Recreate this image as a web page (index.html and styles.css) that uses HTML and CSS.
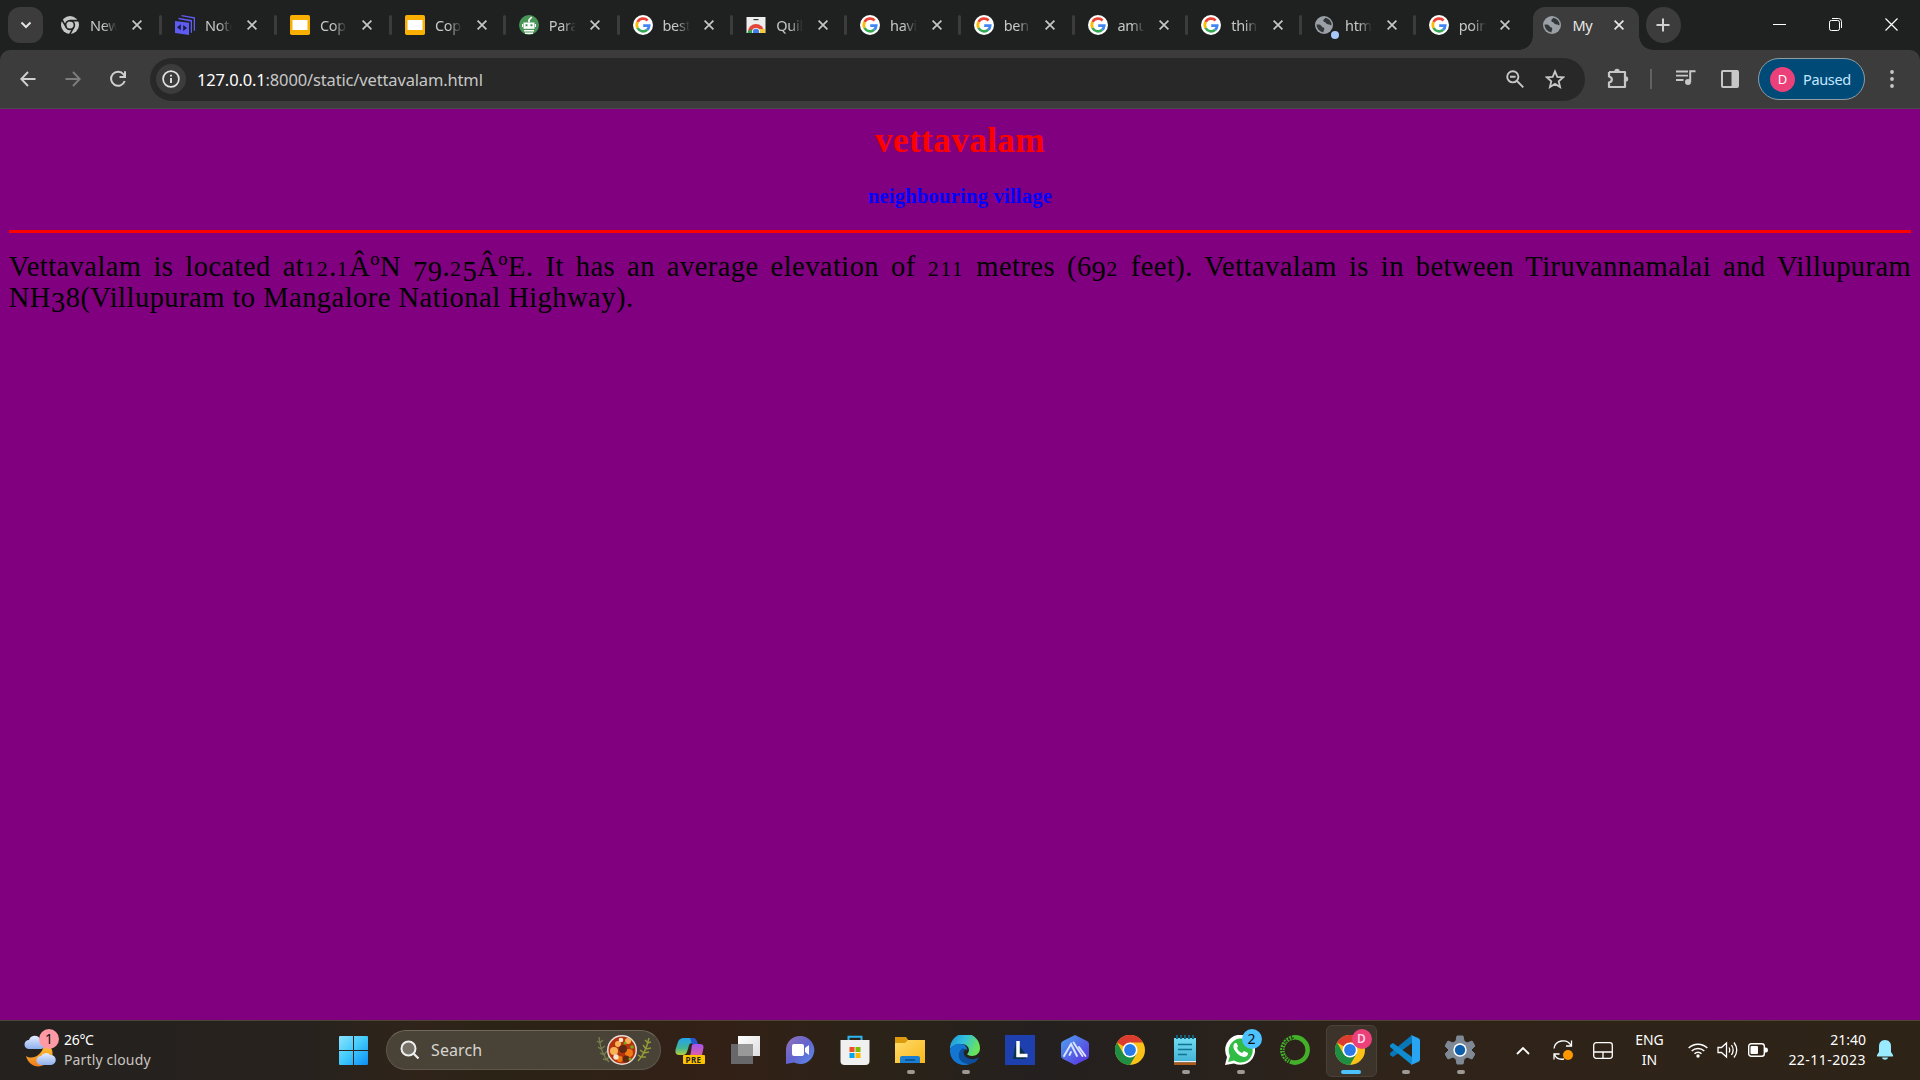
FILE: index.html
```html
<!DOCTYPE html>
<html lang="en">
<head>
<meta charset="utf-8">
<title>My page</title>
<link rel="stylesheet" href="styles.css">
</head>
<body>
<svg class="defs" width="0" height="0" aria-hidden="true">
  <defs>
    <linearGradient id="gWin" x1="0" y1="0" x2="1" y2="1"><stop offset="0" stop-color="#8ae4ff"/><stop offset=".5" stop-color="#40c8fb"/><stop offset="1" stop-color="#0a8df5"/></linearGradient>
    <linearGradient id="gCopA" x1="0" y1="0" x2="0" y2="1"><stop offset="0" stop-color="#22a5ee"/><stop offset=".6" stop-color="#42b596"/><stop offset="1" stop-color="#b6cf3a"/></linearGradient>
    <linearGradient id="gCopB" x1="0" y1="0" x2="0" y2="1"><stop offset="0" stop-color="#a455ee"/><stop offset="1" stop-color="#ee6090"/></linearGradient>
    <linearGradient id="gChat" x1="0" y1="0" x2="1" y2="1"><stop offset="0" stop-color="#9673b9"/><stop offset=".5" stop-color="#6264ce"/><stop offset="1" stop-color="#5b8dec"/></linearGradient>
    <linearGradient id="gFold" x1="0" y1="0" x2="1" y2="1"><stop offset="0" stop-color="#ffdb6b"/><stop offset="1" stop-color="#f9b71a"/></linearGradient>
    <linearGradient id="gEdge" x1="0" y1="0" x2="1" y2=".4"><stop offset="0" stop-color="#1c8ed8"/><stop offset=".5" stop-color="#32bfdc"/><stop offset="1" stop-color="#69e45a"/></linearGradient>
    <linearGradient id="gHex" x1="0" y1="0" x2="1" y2="1"><stop offset="0" stop-color="#4fa3ee"/><stop offset="1" stop-color="#5a2be0"/></linearGradient>
    <linearGradient id="gNote" x1="0" y1="0" x2="0" y2="1"><stop offset="0" stop-color="#6fdcf2"/><stop offset="1" stop-color="#46b4d6"/></linearGradient>
    <linearGradient id="gMoon" x1="0" y1="0" x2="0" y2="1"><stop offset="0" stop-color="#ffc533"/><stop offset="1" stop-color="#ef7c1c"/></linearGradient>
    <linearGradient id="gCloud" x1="0" y1="0" x2="0" y2="1"><stop offset="0" stop-color="#e3edff"/><stop offset="1" stop-color="#8fb0ec"/></linearGradient>
    <linearGradient id="gSq" x1="0" y1="0" x2="1" y2="1"><stop offset="0" stop-color="#fff"/><stop offset="1" stop-color="#dcdcdc"/></linearGradient>
  </defs>
  <symbol id="x" viewBox="0 0 10 10"><path d="M.6.6l8.8 8.8M9.4.6L.6 9.4" stroke="currentColor" stroke-width="1.7" fill="none"/></symbol>
  <symbol id="google" viewBox="0 0 20 20"><circle cx="10" cy="10" r="10" fill="#fff"/><g fill="none" stroke-width="2.7"><path d="M14.6 5.5A6.2 6.2 0 0 0 4.6 7" stroke="#ea4335"/><path d="M4.6 7a6.2 6.2 0 0 0 0 6" stroke="#fbbc05"/><path d="M4.6 13a6.2 6.2 0 0 0 9.6 1.8" stroke="#34a853"/><path d="M14.2 14.8a6.2 6.2 0 0 0 2-4.2H10.2" stroke="#4285f4"/></g></symbol>
  <symbol id="slides" viewBox="0 0 20 20"><rect width="20" height="20" rx="1.8" fill="#f9b000"/><rect x="2.5" y="5" width="15" height="10" fill="#fff"/></symbol>
  <symbol id="chromegray" viewBox="0 0 20 20"><circle cx="10" cy="10" r="9" fill="#c7c7c7"/><g stroke="#1f2020" fill="none" stroke-width="1.6"><circle cx="10" cy="10" r="4.4"/><path d="M10 5.600H19M6.200 12.200L1.800 4.500M13.800 12.200L9.400 20"/></g></symbol>
  <symbol id="notes" viewBox="0 0 20 20"><path d="M6.500 0L20 2.300V16l-1.300-.5V3.500L6.500 1.300zM3.500 2.800L17 5v13l-1.300-.4V6.400L3.500 4.300z" fill="#5d5bf2"/><path d="M0 6l14 1.700V20L0 18z" fill="#5d5bf2"/><path d="M2 12.200l3.800-3v6zM12 13l-3.800-3v6z" fill="#191a40"/></symbol>
  <symbol id="bot" viewBox="0 0 20 20"><circle cx="10" cy="10" r="10" fill="#499557"/><path d="M4.500 7.500h11v6.300h-11z" fill="#fff"/><path d="M10 7.500V4.800L12.800 2" stroke="#fff" stroke-width="1.700" fill="none"/><path d="M5 15h10v1.500H5zM6 17.500h8v1.600H6z" fill="#fff"/><path d="M3 9h1v3H3zM16 9h1v3h-1z" fill="#fff"/><path d="M6.500 9.300h2v2h-2zM11.500 9.300h2v2h-2z" fill="#499557"/></symbol>
  <symbol id="store2" viewBox="0 0 20 20"><path d="M.5 2h19v16H.5z" fill="#eee"/><path d="M7.500 4h5v1.200h-5z" fill="#333"/><clipPath id="cs"><path d="M.5 2h19v16H.5z"/></clipPath><g clip-path="url(#cs)"><circle cx="10" cy="17" r="8" fill="#e0483a"/><path d="M2 16l4-1.500L8 20H1z" fill="#2ba24c"/><path d="M13 14h6v6h-7z" fill="#fcc934"/><circle cx="10" cy="17" r="4" fill="#fff"/><circle cx="10" cy="17" r="3.200" fill="#3f7ee8"/></g></symbol>
  <symbol id="globe" viewBox="0 0 20 20"><circle cx="9" cy="10" r="9" fill="#9aa0a6"/><path d="M1.500 9.500c3-.3 4.500.2 5 1.500.6 1.700 2.800 1 2.800 2.800 0 1.500-1 2-.8 3.700A8 8 0 0 1 1.500 9.500zM10.500 2.700c-.8 1.200-2.200 1.300-2.200 2.800 0 1.600 2 1.300 2.700 2.600.6 1.200 2 1.600 3 1.400 1-.2 1.300.9 2.500.7a7.400 7.400 0 0 0-6-7.500z" fill="#34373a"/></symbol>
  <symbol id="chrome" viewBox="0 0 30 30"><circle cx="15" cy="15" r="15" fill="#fbc116"/><path d="M15 15L2 7.500A15 15 0 0 1 28 7.500H15z" fill="#dc3b2f"/><path d="M2 7.500A15 15 0 0 0 15 30l6.500-11.200L8.500 18.700z" fill="#1f8e43"/><circle cx="15" cy="15" r="7.500" fill="#fff"/><circle cx="15" cy="15" r="5.900" fill="#2a7bea"/></symbol>
</svg>

<header class="browser">
  <nav class="tabstrip">
    <button class="tabsearch"><svg width="12" height="8" viewBox="0 0 12 8"><path d="M1.500 1.500L6 6l4.500-4.500" fill="none" stroke="#e3e3e3" stroke-width="2"/></svg></button>
    <div class="tabs">
      <div class="tab early"><svg class="fav"><use href="#chromegray"/></svg><span>New</span><svg class="close"><use href="#x"/></svg></div>
      <div class="tab early"><svg class="fav"><use href="#notes"/></svg><span>Note</span><svg class="close"><use href="#x"/></svg></div>
      <div class="tab early"><svg class="fav"><use href="#slides"/></svg><span>Cop</span><svg class="close"><use href="#x"/></svg></div>
      <div class="tab"><svg class="fav"><use href="#slides"/></svg><span>Cop</span><svg class="close"><use href="#x"/></svg></div>
      <div class="tab"><svg class="fav"><use href="#bot"/></svg><span>Para</span><svg class="close"><use href="#x"/></svg></div>
      <div class="tab"><svg class="fav"><use href="#google"/></svg><span>best</span><svg class="close"><use href="#x"/></svg></div>
      <div class="tab"><svg class="fav"><use href="#store2"/></svg><span>Quil</span><svg class="close"><use href="#x"/></svg></div>
      <div class="tab"><svg class="fav"><use href="#google"/></svg><span>havi</span><svg class="close"><use href="#x"/></svg></div>
      <div class="tab"><svg class="fav"><use href="#google"/></svg><span>ben</span><svg class="close"><use href="#x"/></svg></div>
      <div class="tab"><svg class="fav"><use href="#google"/></svg><span>amu</span><svg class="close"><use href="#x"/></svg></div>
      <div class="tab"><svg class="fav"><use href="#google"/></svg><span>thin</span><svg class="close"><use href="#x"/></svg></div>
      <div class="tab dot"><svg class="fav"><use href="#globe"/></svg><span>htm</span><svg class="close"><use href="#x"/></svg></div>
      <div class="tab last"><svg class="fav"><use href="#google"/></svg><span>poin</span><svg class="close"><use href="#x"/></svg></div>
      <div class="tab active"><svg class="fav"><use href="#globe"/></svg><span>My</span><svg class="close"><use href="#x"/></svg></div>
    </div>
    <button class="newtab"><svg width="14" height="14" viewBox="0 0 14 14"><path d="M7 .5v13M.5 7h13" stroke="#d0d0d0" stroke-width="2"/></svg></button>
    <div class="wincontrols">
      <svg width="13" height="13"><path d="M0 6.500h13" stroke="#fff"/></svg>
      <svg width="13" height="13" fill="none" stroke="#fff"><rect x=".5" y="2.500" width="10" height="10" rx="1.800"/><path d="M3 .5h6.500a3 3 0 0 1 3 3V10"/></svg>
      <svg width="13" height="13"><path d="M.5.5l12 12M12.500.5l-12 12" stroke="#fff" stroke-width="1.200"/></svg>
    </div>
  </nav>
  <div class="toolbar">
    <div class="navbtns">
      <svg width="16" height="16" viewBox="0 0 16 16" fill="none" stroke="#cfcfcf" stroke-width="1.900"><path d="M8 1L1.300 8 8 15M1.500 8H15.500"/></svg>
      <svg width="16" height="16" viewBox="0 0 16 16" fill="none" stroke="#7d7d7d" stroke-width="1.900"><path d="M8 1l6.700 7L8 15M14.500 8H.5"/></svg>
      <svg width="18" height="18" viewBox="0 0 18 18" fill="none" stroke="#cfcfcf" stroke-width="2"><path d="M15.700 11A7 7 0 1 1 14.600 4.500L16 6.300M10.500 7H16V1.200"/></svg>
    </div>
    <div class="omnibox">
      <i class="info"><svg width="18" height="18" viewBox="0 0 18 18"><circle cx="9" cy="9" r="7.900" fill="none" stroke="#e3e3e3" stroke-width="1.700"/><path d="M9 8v5M9 4.700v1.900" stroke="#e3e3e3" stroke-width="1.900"/></svg></i>
      <span class="url"><b>127.0.0.1</b>:8000/static/vettavalam.html</span>
      <svg class="magnify" width="18" height="18" viewBox="0 0 18 18" fill="none" stroke="#c7c7c7" stroke-width="1.900"><circle cx="6.800" cy="6.800" r="5.600"/><path d="M11 11l6.300 6.300M4 6.800h5.600"/></svg>
      <svg width="20" height="20" viewBox="0 0 20 20"><path d="M10 2.400l2.300 5.400 5.900.5-4.500 3.900 1.400 5.800-5.100-3.100L4.900 18l1.400-5.800-4.500-3.900 5.900-.5z" fill="none" stroke="#c7c7c7" stroke-width="1.800"/></svg>
    </div>
    <svg class="puzzle" width="22" height="22" viewBox="0 0 22 22"><path d="M2 5h16v5.500M18 13.500V20H2v-4.500c3.800-.8 3.800-5.200 0-6V5" fill="none" stroke="#c7c7c7" stroke-width="2.200" stroke-linejoin="round"/><path d="M7.300 4.500a2.700 2.700 0 0 1 5.400 0zM18.500 9.300a2.700 2.700 0 0 1 0 5.400h-1.600V9.300z" fill="#c7c7c7"/></svg>
    <i class="divider"></i>
    <svg class="music" width="20" height="16" viewBox="0 0 20 16"><path d="M0 1.500h12M0 5.700h12M0 10h7.500" stroke="#c7c7c7" stroke-width="1.800"/><circle cx="12" cy="12" r="3" fill="#c7c7c7"/><path d="M14.200 12V1.200H19.500" fill="none" stroke="#c7c7c7" stroke-width="2"/></svg>
    <svg class="panel" width="18" height="18" viewBox="0 0 18 18"><rect x="1" y="1" width="16" height="16" rx="1" fill="none" stroke="#c7c7c7" stroke-width="2"/><path d="M10.500 1H17v16h-6.500z" fill="#c7c7c7"/></svg>
    <div class="profile"><i>D</i><span>Paused</span></div>
    <svg class="dots" width="4" height="18" fill="#c7c7c7"><circle cx="2" cy="2" r="1.900"/><circle cx="2" cy="9" r="1.900"/><circle cx="2" cy="16" r="1.900"/></svg>
  </div>
</header>

<main class="page">
  <h1>vettavalam</h1>
  <h3>neighbouring village</h3>
  <hr>
  <p class="first">Vettavalam is located at<i>12</i>.<i>1</i>Â<span class="ord">º</span>N <u>79</u>.<i>2</i><u>5</u>Â<span class="ord">º</span>E. It has an average elevation of <i>211</i> metres (6<u>9</u><i>2</i> feet). Vettavalam is in between Tiruvannamalai and Villupuram</p>
  <p class="second">NH<u>3</u>8(Villupuram to Mangalore National Highway).</p>
</main>

<footer class="taskbar">
  <div class="weather">
    <svg width="36" height="36" viewBox="0 0 36 36"><path d="M27 13a12 12 0 0 1-5 20c-8 4-16-1-18-9 6 4 16 0 18-11z" fill="url(#gMoon)"/><path d="M7 17a4.500 4.500 0 0 1 0-9 6 6 0 0 1 11-1 5 5 0 0 1 1 10z" fill="url(#gCloud)"/><path d="M19 33a4.500 4.500 0 0 1 0-9 6 6 0 0 1 9.500-1A5 5 0 0 1 29 33z" fill="url(#gCloud)"/></svg>
    <b class="count pink">1</b>
    <div><span>26°C</span><em>Partly cloudy</em></div>
  </div>
  <svg class="start" width="29" height="29" viewBox="0 0 29 29"><path d="M0 1q0-1 1-1H14v14H0zM15 0h13q1 0 1 1v13H15zM0 15h14v14H1q-1 0-1-1zM15 15h14v13q0 1-1 1H15z" fill="url(#gWin)"/></svg>
  <div class="search">
    <svg width="20" height="20" viewBox="0 0 20 20"><circle cx="8.500" cy="8.500" r="7" fill="#777268" stroke="#eee" stroke-width="2"/><path d="M13.500 13.500l5 5" stroke="#eee" stroke-width="2.300"/></svg>
    <span>Search</span>
    <svg width="58" height="34" viewBox="0 0 58 34"><g fill="none" stroke="#76804d" stroke-width="1.300"><path d="M3 4c1 10 3 18 10 25M1 8l3 2 3-3M2 14l3 2 4-3M4 20l4 2 3-4M7 26l4 1 2-4"/></g><g fill="none" stroke="#8f9a3a" stroke-width="1.500"><path d="M53 5c-2 9-5 17-11 23M49 7l3 3 3-1M47 12l3 4 5-1M44 17l4 3 5-1M42 22l3 2 5 0"/></g><circle cx="26" cy="17" r="15" fill="#e8dfdb"/><circle cx="26" cy="17" r="13.500" fill="#b5330d"/><g fill="#f7b354"><circle cx="18" cy="18" r="4"/><circle cx="22" cy="11" r="3"/><circle cx="32" cy="8" r="3"/></g><g fill="#f07a13"><circle cx="33" cy="20" r="4"/><circle cx="24" cy="26" r="3"/></g><g fill="#5f2815"><circle cx="27" cy="16" r="4"/><circle cx="30" cy="26" r="3.500"/></g><g fill="#f5e6d0"><circle cx="25" cy="7" r="2.300"/><circle cx="20" cy="24" r="2.700"/></g><g fill="#78a820"><circle cx="36" cy="14" r="1.800"/><circle cx="29" cy="10" r="1.500"/><circle cx="34" cy="26" r="1.500"/></g></svg>
  </div>
  <div class="apps">
    <div class="app"><svg width="30" height="30" viewBox="0 0 30 30"><path d="M9 3h7c4 0 5 2 6 5h-5c-3 0-3 3-4 6s-2 6-5 6H4c-4 0-4-4-3-7l2-6c1-3 3-4 6-4z" fill="url(#gCopA)"/><path d="M15 3h3c3 0 4 3 5 6h-6z" fill="#2756cf"/><path d="M19 9h6c4 0 4 3 3 6l-1 5c-1 3-3 4-6 4h-9c3 0 3-3 4-7 1-5 0-8 3-8z" fill="url(#gCopB)"/></svg><span class="pre">PRE</span></div>
    <div class="app"><svg width="30" height="30" viewBox="0 0 30 30"><rect x="8" y="1" width="22" height="20" fill="url(#gSq)"/><rect x="1" y="9" width="22" height="20" fill="#68686a"/><path d="M8 9h15v12H8z" fill="#999"/></svg></div>
    <div class="app"><svg width="30" height="30" viewBox="0 0 30 30"><path d="M15 1a14 14 0 1 1-6 26.500L1 29V15A14 14 0 0 1 15 1z" fill="url(#gChat)"/><rect x="7" y="9" width="12" height="12" rx="2" fill="#fff"/><path d="M20 13l4-3v10l-4-3z" fill="#fff"/></svg></div>
    <div class="app"><svg width="30" height="30" viewBox="0 0 30 30"><path d="M8.500 6V1.800h13V6" fill="none" stroke="#2cb5ef" stroke-width="2"/><path d="M.5 5h29v21q0 4-4 4h-21q-4 0-4-4z" fill="#f0f0f0"/><path d="M9.500 12h5v5h-5z" fill="#f04f22"/><path d="M15.500 12h5v5h-5z" fill="#80bb03"/><path d="M9.500 18h5v5h-5z" fill="#03a4ee"/><path d="M15.500 18h5v5h-5z" fill="#fdb803"/></svg></div>
    <div class="app run"><svg width="30" height="30" viewBox="0 0 30 30"><path d="M0 2h11l3 4v5H0z" fill="#dc9a0e"/><path d="M0 8h10l3-3h17v23H0z" fill="url(#gFold)"/><path d="M5 28v-5q0-2 2-2h16q2 0 2 2v5z" fill="#1a7fd1"/><path d="M10 25h10" stroke="#0a4b87" stroke-width="1.500"/></svg></div>
    <div class="app run"><svg width="30" height="30" viewBox="0 0 30 30"><path d="M0 14A15 15 0 0 1 30 13c0 8-8 9-12 7-2-1 1-2 1-5s-3-6-7-6C6 9 1 12 0 14z" fill="url(#gEdge)"/><path d="M0 14c2-4 7-6 11-5 4 0 6 3 6 6-3-2-6 1-6 4 0 5 4 9 9 10C9 33-1 25 0 14z" fill="#1377d2"/><path d="M13 13c-6 3-7 16 7 16 5-1 7-3 9-7-5 4-14 2-15-3-1-2 0-3 1-4z" fill="#0c4f9f"/></svg></div>
    <div class="app"><svg width="30" height="30" viewBox="0 0 30 30"><path d="M0 0h30v30H0z" fill="#1e40af"/><path d="M11 6l-3 18h12l2-3z" fill="#09324b"/><path d="M13 6v14.500h9.500" fill="none" stroke="#fff" stroke-width="3.500"/></svg></div>
    <div class="app"><svg width="30" height="30" viewBox="0 0 30 30"><path d="M15 0l12 6q2 1 2 3v12q0 2-2 3l-12 6-12-6q-2-1-2-3V9q0-2 2-3z" fill="url(#gHex)"/><path d="M4 21l7-12 6 12M13.500 7.500l9 13.500M19 12l6.500 9M9.500 20l1.500-3" fill="none" stroke="#dce5ff" stroke-width="1.900" stroke-linecap="round"/></svg></div>
    <div class="app"><svg width="30" height="30"><use href="#chrome"/></svg></div>
    <div class="app run"><svg width="30" height="30" viewBox="0 0 30 30"><path d="M4 3h22v23H4z" fill="url(#gNote)"/><path d="M4 26h22v1.500H4z" fill="#eee"/><path d="M4 27.500h22V30H4z" fill="#aa5b1c"/><path d="M7 0v4M11 0v4M15 0v4M19 0v4M23 0v4" stroke="#11637d" stroke-width="2"/><path d="M8 9.500h14M8 14.500h14M8 19.500h9" stroke="#107391" stroke-width="1.700"/></svg></div>
    <div class="app run"><svg width="30" height="30" viewBox="0 0 30 30"><path d="M0 30l2-8A15 15 0 1 1 9 28.500z" fill="#fff"/><path d="M3 27l2-6a12 12 0 1 1 4 4.500z" fill="#31bd45"/><path d="M10 8c-5 4 3 14 10 14 3-1 3-3 3-4l-4-2-2 2c-3-1-4-3-5-5l1-2-1.500-3z" fill="#fff"/></svg><b class="count blue">2</b></div>
    <div class="app"><svg width="30" height="30" viewBox="0 0 30 30" fill="none"><path d="M13 2.500a12.600 12.600 0 1 1-3 24" stroke="#43b02a" stroke-width="4.500"/><path d="M14 2.500a12.500 12.500 0 0 0-5 23.500" stroke="#43b02a" stroke-width="4.500" stroke-dasharray="2 .8"/><path d="M14 3a12 12 0 0 0-6 22" stroke="#2b221c" stroke-width="1.200" stroke-dasharray="2 2"/></svg></div>
    <div class="app current"><svg width="30" height="30"><use href="#chrome"/></svg><b class="count d">D</b></div>
    <div class="app run"><svg width="30" height="30" viewBox="0 0 30 30"><path d="M22 0L0 18v2l3 2L22 8z" fill="#0877ba"/><path d="M22 30L0 12v-2l3-2 19 14z" fill="#0f8ccf"/><path d="M21 0l7 3q2 1 2 2v20q0 1-2 2l-7 3q1-1 1-3V3q0-2-1-3z" fill="#27a5f2"/></svg></div>
    <div class="app run"><svg width="30" height="30" viewBox="0 0 30 30"><path d="M12 1h6l1 5 3 2 5-2 3 5-4 4 4 4-3 5-5-2-3 2-1 5h-6l-1-5-3-2-5 2-3-5 4-4-4-4 3-5 5 2 3-2z" fill="#7f8995" stroke="#7f8995" stroke-linejoin="round"/><circle cx="15" cy="15" r="6.700" fill="#fff"/><circle cx="15" cy="15" r="5.200" fill="#0d5fad"/></svg></div>
  </div>
  <div class="tray">
    <svg class="chev" width="14" height="9" viewBox="0 0 14 9"><path d="M1 8l6-6 6 6" fill="none" stroke="#fff" stroke-width="1.800"/></svg>
    <svg class="sync" width="22" height="22" viewBox="0 0 22 22" fill="none" stroke="#fff" stroke-width="1.300"><path d="M2 9.500C3 1 15-1 19 6.500M19.500 1.500v5.500H14M12 20c-5 1-8-1-9.500-4.500M2 20.500V15h5.500"/><circle cx="16" cy="16" r="5" fill="#ff9800" stroke="none"/></svg>
    <svg class="pad" width="20" height="17" viewBox="0 0 20 17" fill="none" stroke="#fff" stroke-width="1.300"><rect x=".7" y=".7" width="18.600" height="15.600" rx="2.500"/><path d="M1 10h18M10 10v6"/></svg>
    <div class="lang">ENG<br>IN</div>
    <svg class="wifi" width="20" height="16" viewBox="0 0 20 16" fill="none" stroke="#fff" stroke-width="1.500"><path d="M.7 6a13.200 13.200 0 0 1 18.600 0M3.700 9a9 9 0 0 1 12.600 0M6.500 11.800a5 5 0 0 1 7 0"/><circle cx="10" cy="14" r="1.700" fill="#fff" stroke="none"/></svg>
    <svg class="vol" width="21" height="18" viewBox="0 0 21 18" fill="none" stroke="#fff" stroke-width="1.300"><path d="M1 6.500h3.500L9.500 2v14l-5-4.500H1zM12 6.500q1.500 2.500 0 5M14.500 4q3.300 5 0 10M17 1.500q5.500 7.500 0 15"/></svg>
    <svg class="bat" width="20" height="14" viewBox="0 0 20 14"><rect x=".7" y=".7" width="15.600" height="12.600" rx="2.500" fill="none" stroke="#fff" stroke-width="1.400"/><rect x="2.500" y="3" width="7.500" height="8" rx="1" fill="#fff"/><path d="M17 4.500h1q2 0 2 2.500t-2 2.500h-1z" fill="#fff"/></svg>
    <div class="clock">21:40<br><span>22-11-2023</span></div>
    <svg class="bell" width="16" height="20" viewBox="0 0 16 20"><path d="M8 0c4 0 6 3 6 6v6l2 3q.5 1.500-1 1.500H1q-1.500 0-1-1.500l2-3V6c0-3 2-6 6-6zM5 17.500h6c-.5 3-5.500 3-6 0z" fill="#99ebff"/></svg>
  </div>
</footer>
</body>
</html>
```
FILE: styles.css
```css
* { box-sizing: border-box; }
body { margin: 0; width: 1920px; height: 1080px; overflow: hidden; display: flex; flex-direction: column; background: purple; font-family: "Noto Sans", sans-serif; }
svg { flex: none; display: block; }
.defs { position: absolute; }
button { border: 0; padding: 0; display: flex; align-items: center; justify-content: center; background: #3c3c3c; }

.browser { flex: none; height: 109px; background: #1f2020; border-bottom: 1px solid #4a4a4a; }
.tabstrip { height: 50px; display: flex; align-items: flex-start; }
.tabsearch { width: 35px; height: 36px; border-radius: 12px; margin: 7px 3px 0 8px; }
.tabs { display: flex; height: 50px; }
.tab { width: 113.750px; height: 50px; display: flex; align-items: center; padding-left: 14px; color: #c7c7c7; position: relative; }
.tab.early { width: 115px; }
.tab::after { content: ""; position: absolute; right: -1px; top: 15px; width: 3px; height: 20px; border-radius: 2px; background: #3c3c3c; }
.tab.last::after, .tab.active::after { display: none; }
.fav { width: 20px; height: 20px; }
.tab span { width: 27px; margin: 0 0 0 10px; font-size: 14.5px; line-height: 20px; letter-spacing: -.3px; overflow: hidden; white-space: nowrap; -webkit-mask-image: linear-gradient(90deg, #000 50%, transparent); mask-image: linear-gradient(90deg, #000 50%, transparent); }
.close { width: 10px; height: 10px; margin-left: 14.500px; }
.tab.dot::before { content: ""; position: absolute; left: 30px; top: 31px; width: 8px; height: 8px; border-radius: 50%; background: #a8c7fa; z-index: 1; }
.tab.active { width: 106px; height: 43px; margin: 7px 0 0 4px; padding: 0 0 7px 10px; border-radius: 12px 12px 0 0; background: #3c3c3c; color: #e8e8e8; }
.tab.active::before { content: ""; position: absolute; left: -14px; right: -14px; bottom: 0; height: 14px; background: radial-gradient(circle at 0 0, transparent 13.500px, #3c3c3c 14px) left / 14px 14px no-repeat, radial-gradient(circle at 100% 0, transparent 13.500px, #3c3c3c 14px) right / 14px 14px no-repeat; }
.tab.active span { -webkit-mask-image: none; mask-image: none; }
.newtab { width: 35px; height: 36px; border-radius: 50%; margin: 7px 0 0 7px; }
.wincontrols { display: flex; gap: 43px; margin: 18px 22px 0 auto; }

.toolbar { height: 58px; background: #3c3c3c; border-radius: 10px 10px 0 0; display: flex; align-items: center; }
.navbtns { width: 150px; display: flex; align-items: center; gap: 28.500px; padding-left: 20px; }
.omnibox { width: 1435px; height: 43px; border-radius: 22px; background: #282828; display: flex; align-items: center; padding: 0 20px 0 6px; }
.info { width: 30px; height: 30px; border-radius: 50%; background: #3c3c3c; display: flex; align-items: center; justify-content: center; }
.url { margin-left: 11px; font-size: 16.500px; letter-spacing: -.15px; color: #c7c7c7; }
.url b { font-weight: 400; color: #fff; }
.magnify { margin: 0 21px 0 auto; }
.puzzle { margin: -3px 0 0 22px; }
.divider { width: 2px; height: 20px; background: #626262; margin-left: 21px; }
.music { margin: -3px 0 0 24px; }
.panel { margin-left: 25px; }
.profile { width: 107px; height: 42px; margin-left: 19px; border: 1px solid #8f9ba3; border-radius: 21px; background: #004a77; display: flex; align-items: center; padding-left: 11px; color: #c2e7ff; font-size: 14.500px; }
.profile i { width: 25px; height: 25px; border-radius: 50%; background: #ec407a; color: #fff; font-style: normal; font-size: 13px; line-height: 25px; text-align: center; margin-right: 8px; }
.profile span { letter-spacing: -.35px; }
.dots { margin-left: 25px; }

.page { flex: 1; padding: 8.800px; background: purple; font-family: "Liberation Serif", serif; color: #000; }
h1, h3 { text-align: center; }
h1 { margin: 2px 0 0; font-size: 35.200px; line-height: 41px; letter-spacing: .4px; color: red; }
h3 { margin: 23px 0 0; font-size: 20.600px; line-height: 24px; letter-spacing: .2px; color: blue; }
hr { height: 3px; margin: 22px 0 18px; border: 0; background: red; }
.page p { margin: 0; font-size: 28.500px; line-height: 31.500px; white-space: nowrap; }
.page p.first { letter-spacing: .45px; text-align: justify; text-align-last: justify; }
.page p.second { letter-spacing: .48px; }
.page i { font-style: normal; font-size: 22px; line-height: 0; letter-spacing: 1.500px; }
.page u { text-decoration: none; position: relative; top: 5px; }
.ord { font-size: 30px; line-height: 0; }

.taskbar { flex: none; height: 60px; padding-bottom: 1px; border-top: 1px solid #4c4636; background: linear-gradient(90deg, #24211f 0, #27221d 310px, #30241a 420px, #2b2316 500px, #332016 710px, #2b2318 880px, #24201f 1040px, #27211d 1180px, #30241a 1400px, #2e2317 1920px); display: flex; align-items: center; color: #fff; font-size: 14px; }
.weather { width: 338px; display: flex; align-items: center; padding-left: 22px; position: relative; }
.weather div { margin: -1px 0 0 6px; line-height: 20px; }
.weather span, .weather em { display: block; font-style: normal; letter-spacing: -.3px; }
.weather em { color: #c8c5c0; letter-spacing: .15px; }
.count { position: absolute; width: 20px; height: 20px; border-radius: 50%; font-weight: 400; font-size: 14px; line-height: 20px; text-align: center; color: #111; }
.pink { left: 39px; top: -2px; background: #ff99a4; }
.start { margin: 0 19px 0 1px; }
.search { width: 275px; height: 40px; border-radius: 20px; border: 1px solid #5e574a; border-top-color: #716a5c; background: #494236; display: flex; align-items: center; padding: 0 6px 0 13px; margin-right: 1.500px; margin-left: -1px; }
.search span { flex: 1; margin-left: 11px; font-size: 16px; letter-spacing: .1px; color: #d8d5d0; }
.apps { display: flex; }
.app { width: 55px; height: 58px; display: flex; align-items: center; justify-content: center; position: relative; }
.run::after, .current::after { content: ""; position: absolute; left: 24px; bottom: 5px; width: 8px; height: 4px; border-radius: 2px; background: #9c9893; }
.current::after { left: 18px; width: 20px; background: #4cc2ff; }
.current::before { content: ""; position: absolute; left: 3px; top: 4px; width: 49px; height: 50px; border-radius: 6px; background: #3c342b; border: 1px solid #4a4238; }
.current svg { z-index: 1; }
.blue { left: 29px; top: 8px; background: #4cc2ff; }
.d { left: 29px; top: 8px; background: #ec407a; color: #ffd5e2; font-size: 12px; font-weight: 600; z-index: 2; }
.pre { position: absolute; left: 20px; top: 34px; width: 22px; height: 9px; border-radius: 1px; background: #ffc400; color: #222; font: 700 8px/9px "Noto Sans", sans-serif; text-align: center; letter-spacing: .4px; }
.tray { flex: 1; display: flex; align-items: center; padding-left: 28px; }
.sync { margin-left: 22px; }
.pad { margin-left: 19px; }
.lang { width: 50px; margin-left: 12px; text-align: center; line-height: 20px; }
.wifi { margin-left: 13px; }
.vol { margin-left: 9px; }
.bat { margin-left: 10px; }
.clock { flex: 1; text-align: right; line-height: 20px; margin-top: -1px; white-space: nowrap; }
.clock span { letter-spacing: .45px; }
.bell { margin: 0 27px 0 11px; }
```
